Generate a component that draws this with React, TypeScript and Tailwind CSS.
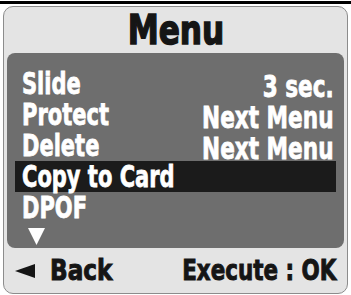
const font = "font-['DejaVu_Sans',sans-serif] font-bold"

const rows = [
  { label: "Slide", value: "3 sec." },
  { label: "Protect", value: "Next Menu" },
  { label: "Delete", value: "Next Menu" },
  { label: "Copy to Card", value: "", active: true },
  { label: "DPOF", value: "" },
]

export default function App() {
  return (
    <div className={`w-[351px] h-[295px] bg-white ${font}`}>
      <div className="mt-[1px] h-[3px] bg-black" />
      <div className="mx-[3px] mt-[2px] flex h-[288px] flex-col rounded-[10px] border border-[#8c8c8c] bg-[#e4e4e4]">
        <div className="flex h-[46px] items-center justify-center text-[40px] leading-none text-[#151515]">
          <span className="inline-block scale-x-[0.78] whitespace-nowrap [-webkit-text-stroke:1.5px_#151515]">Menu</span>
        </div>
        <div className="mx-[3px] flex h-[195px] flex-col rounded-[8px] bg-[#6e6e6e] pt-[15px]">
          {rows.map((r) => (
            <div
              key={r.label}
              className={`mx-[8px] flex h-[31px] justify-between px-[7px] pr-[2px] text-[30px] leading-[31px] text-white [-webkit-text-stroke:0.8px_white] ${
                r.active ? "bg-[#1b1b1b]" : ""
              }`}
            >
              <span className="inline-block origin-left scale-x-[0.7] whitespace-nowrap">{r.label}</span>
              {r.value && (
                <span className="inline-block origin-right scale-x-[0.72] whitespace-nowrap pt-[6px] leading-[25px]">
                  {r.value}
                </span>
              )}
            </div>
          ))}
          <div className="ml-[21px] mt-[5px]">
            <svg width="17" height="17" viewBox="0 0 17 17">
              <polygon points="0,0 17,0 8.5,17" fill="white" />
            </svg>
          </div>
        </div>
        <div className="flex flex-1 items-center justify-between pl-[11px] pr-[20px] text-[29px] leading-none text-[#151515] [-webkit-text-stroke:1px_#151515]">
          <div className="flex items-center gap-[15px]">
            <svg width="20" height="14" viewBox="0 0 20 14">
              <polygon points="0,7 20,0 20,14" fill="#151515" />
            </svg>
            <span className="inline-block origin-left scale-x-[0.8] whitespace-nowrap">Back</span>
          </div>
          <span className="inline-block origin-right scale-x-[0.74] whitespace-nowrap">Execute : OK</span>
        </div>
      </div>
    </div>
  )
}
